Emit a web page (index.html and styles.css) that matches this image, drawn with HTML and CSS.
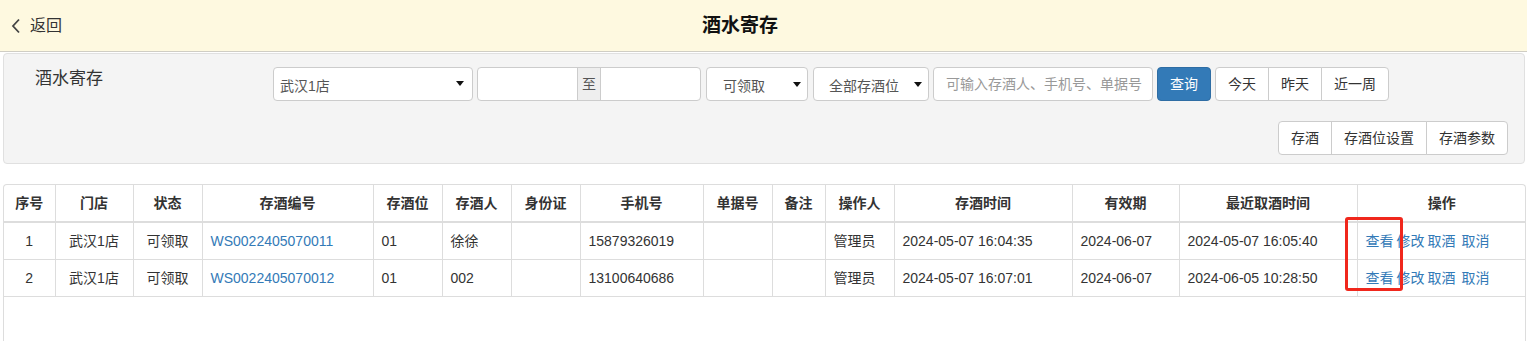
FILE: index.html
```html
<!DOCTYPE html>
<html lang="zh">
<head>
<meta charset="utf-8">
<title>酒水寄存</title>
<link rel="stylesheet" href="styles.css">
</head>
<body>
<header class="topbar">
  <a class="back"><svg class="back-icon" width="10" height="16" viewBox="0 0 10 16"><polyline points="8,1.5 2,8 8,14.5" fill="none" stroke="#444" stroke-width="1.8"/></svg><span>返回</span></a>
  <h1 class="title">酒水寄存</h1>
</header>

<section class="panel">
  <div class="row1">
    <div class="panel-label">酒水寄存</div>
    <div class="filters">
      <div class="select sel-store"><span>武汉1店</span><i class="caret"></i></div>
      <div class="date-group">
        <div class="date-input"></div>
        <div class="addon">至</div>
        <div class="date-input"></div>
      </div>
      <div class="select sel-status"><span>可领取</span><i class="caret"></i></div>
      <div class="select sel-pos"><span>全部存酒位</span><i class="caret"></i></div>
      <div class="text-input"><span class="placeholder">可输入存酒人、手机号、单据号</span></div>
      <button class="btn btn-primary">查询</button>
      <div class="btn-group">
        <button class="btn">今天</button><button class="btn">昨天</button><button class="btn">近一周</button>
      </div>
    </div>
  </div>
  <div class="row2">
    <div class="btn-group">
      <button class="btn">存酒</button><button class="btn">存酒位设置</button><button class="btn">存酒参数</button>
    </div>
  </div>
</section>

<section class="table-box">
  <table class="grid">
    <colgroup>
      <col style="width:51px"><col style="width:78px"><col style="width:69px"><col style="width:171px"><col style="width:69px"><col style="width:69px"><col style="width:69px"><col style="width:123px"><col style="width:69px"><col style="width:53px"><col style="width:69px"><col style="width:178px"><col style="width:107px"><col style="width:178px"><col style="width:169px">
    </colgroup>
    <thead>
      <tr><th>序号</th><th>门店</th><th>状态</th><th>存酒编号</th><th>存酒位</th><th>存酒人</th><th>身份证</th><th>手机号</th><th>单据号</th><th>备注</th><th>操作人</th><th>存酒时间</th><th>有效期</th><th>最近取酒时间</th><th>操作</th></tr>
    </thead>
    <tbody>
      <tr><td class="c">1</td><td class="c">武汉1店</td><td class="c">可领取</td><td><a class="link">WS0022405070011</a></td><td>01</td><td>徐徐</td><td></td><td>15879326019</td><td></td><td></td><td>管理员</td><td>2024-05-07 16:04:35</td><td>2024-06-07</td><td>2024-05-07 16:05:40</td><td class="ops"><a class="link">查看</a><a class="link">修改</a><a class="link">取酒</a><a class="link wide">取消</a></td></tr>
      <tr><td class="c">2</td><td class="c">武汉1店</td><td class="c">可领取</td><td><a class="link">WS0022405070012</a></td><td>01</td><td>002</td><td></td><td>13100640686</td><td></td><td></td><td>管理员</td><td>2024-05-07 16:07:01</td><td>2024-06-07</td><td>2024-06-05 10:28:50</td><td class="ops"><a class="link">查看</a><a class="link">修改</a><a class="link">取酒</a><a class="link wide">取消</a></td></tr>
    </tbody>
  </table>
</section>

<div class="mark"></div>
</body>
</html>
```

FILE: styles.css
```css
* { box-sizing: border-box; }
html, body { margin: 0; padding: 0; }
body {
  font-family: "Liberation Sans", Arial, "Noto Sans CJK SC", sans-serif;
  font-size: 14px;
  line-height: 20px;
  color: #333;
  background: #fff;
  width: 1527px;
  height: 341px;
  overflow: hidden;
  position: relative;
}

.topbar {
  height: 52px;
  background: #fef9e0;
  border-bottom: 1px solid #cfcdc4;
  display: flex;
  align-items: center;
  padding-left: 11px;
  padding-right: 58px;
  position: relative;
}
.back {
  display: flex;
  align-items: center;
  font-size: 16px;
  color: #333;
  position: absolute;
  left: 11px;
  top: 16px;
}
.back-icon { margin-right: 9px; }
.title {
  margin: 0 auto;
  font-size: 19px;
  font-weight: bold;
  color: #111;
  line-height: 24px;
}

.panel {
  margin: 1px 2px 0 3px;
  background: #f4f4f4;
  border: 1px solid #e0e0e0;
  border-radius: 4px;
  padding: 13px 16px 7px 0;
  height: 111px;
}
.row1 { display: flex; align-items: flex-start; }
.panel-label {
  width: 269px;
  padding-left: 31px;
  font-size: 17px;
  line-height: 20px;
  padding-top: 2px;
  color: #333;
}
.filters { display: flex; align-items: center; }
.select, .date-group, .text-input {
  height: 34px;
  border: 1px solid #ccc;
  border-radius: 4px;
  background: #fff;
  display: flex;
  align-items: center;
  position: relative;
}
.select span { font-size: 14px; color: #555; }
.caret {
  position: absolute;
  right: 6px;
  top: 14px;
  width: 0; height: 0;
  border-left: 4px solid transparent;
  border-right: 4px solid transparent;
  border-top: 5px solid #111;
}
.sel-store { width: 200px; padding-left: 6px; padding-top: 3px; }
.sel-store .caret { right: 8px; top: 13px; }
.date-group { width: 224px; margin-left: 4px; overflow: hidden; }
.date-input { width: 100px; height: 100%; }
.addon {
  width: 24px; height: 100%;
  background: #eee;
  border-left: 1px solid #ccc;
  border-right: 1px solid #ccc;
  display: flex; align-items: center; justify-content: center;
  color: #555;
}
.sel-status { width: 102px; margin-left: 5px; padding-left: 16px; padding-top: 3px; }
.sel-pos { width: 116px; margin-left: 5px; padding-left: 15px; padding-top: 3px; }
.text-input { width: 220px; margin-left: 4px; padding-left: 12px; overflow: hidden; white-space: nowrap; }
.placeholder { color: #999; font-size: 14px; }

.btn {
  font-family: inherit;
  font-size: 14px;
  line-height: 20px;
  height: 34px;
  padding: 6px 12px;
  border: 1px solid #ccc;
  background: #fff;
  color: #333;
  border-radius: 4px;
  margin: 0;
}
.btn-primary {
  background: #337ab7;
  border-color: #2e6da4;
  color: #fff;
  margin-left: 4px;
}
.filters .btn-group { margin-left: 4px; }
.btn-group { display: flex; }
.btn-group .btn { border-radius: 0; margin-left: -1px; }
.btn-group .btn:first-child { border-radius: 4px 0 0 4px; margin-left: 0; }
.btn-group .btn:last-child { border-radius: 0 4px 4px 0; }

.row2 { display: flex; justify-content: flex-end; margin-top: 20px; }

.table-box {
  margin: 20px 1px 0 3px;
  border: 1px solid #ddd;
  border-bottom: none;
  border-radius: 4px 4px 0 0;
  height: 157px;
  overflow: hidden;
}
.grid {
  border-collapse: collapse;
  table-layout: fixed;
  width: 1522px;
}
.grid th, .grid td {
  border: 1px solid #ddd;
  padding: 8px;
  line-height: 20px;
  font-size: 14px;
  white-space: nowrap;
  overflow: hidden;
}
.grid th {
  font-weight: bold;
  text-align: center;
  border-top: none;
  border-bottom-width: 2px;
  color: #333;
}
.grid td { text-align: left; color: #333; }
.grid td.c { text-align: center; }
.grid tr > :first-child { border-left: none; }
.grid tr > :last-child { border-right: none; }
.link { color: #337ab7; text-decoration: none; }
.ops { padding-left: 8px; }
.ops .link { margin-right: 3px; }
.ops .link.wide { margin-left: 3px; }

.mark {
  position: absolute;
  left: 1345px;
  top: 217px;
  width: 58px;
  height: 74px;
  border: 3px solid #f0271c;
  border-radius: 3px;
}
```
